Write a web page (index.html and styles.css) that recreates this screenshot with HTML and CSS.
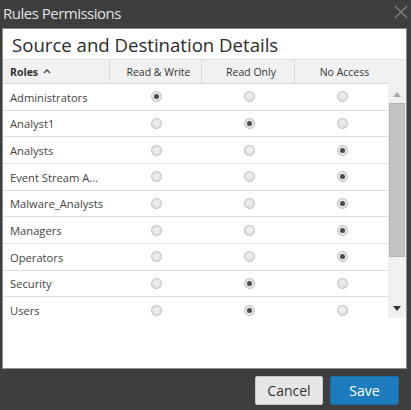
FILE: index.html
```html
<!DOCTYPE html>
<html>
<head>
<meta charset="utf-8">
<link rel="stylesheet" href="styles.css">
</head>
<body>
<div class="dialog">
  <div class="titlebar">
    <span class="title">Rules Permissions</span>
    <svg class="close" width="14" height="14" viewBox="0 0 14 14"><path d="M1 1L13 13M13 1L1 13" stroke="#7a7a7a" stroke-width="1.6" fill="none"/></svg>
  </div>
  <div class="panel">
    <div class="heading">Source and Destination Details</div>
    <div class="thead">
      <div class="th c-role">Roles <svg class="caret" width="8" height="6" viewBox="0 0 8 6"><path d="M1 5L4 2L7 5" stroke="#444" stroke-width="1.3" fill="none"/></svg></div>
      <div class="th c-rw">Read &amp; Write</div>
      <div class="th c-ro">Read Only</div>
      <div class="th c-na">No Access</div>
      <div class="th c-sb"></div>
    </div>
    <div class="tbody">
      <div class="rows">
        <div class="row"><div class="td c-role">Administrators</div><div class="td c-rw"><span class="radio on"></span></div><div class="td c-ro"><span class="radio"></span></div><div class="td c-na"><span class="radio"></span></div></div>
        <div class="row"><div class="td c-role">Analyst1</div><div class="td c-rw"><span class="radio"></span></div><div class="td c-ro"><span class="radio on"></span></div><div class="td c-na"><span class="radio"></span></div></div>
        <div class="row"><div class="td c-role">Analysts</div><div class="td c-rw"><span class="radio"></span></div><div class="td c-ro"><span class="radio"></span></div><div class="td c-na"><span class="radio on"></span></div></div>
        <div class="row"><div class="td c-role">Event Stream A...</div><div class="td c-rw"><span class="radio"></span></div><div class="td c-ro"><span class="radio"></span></div><div class="td c-na"><span class="radio on"></span></div></div>
        <div class="row"><div class="td c-role">Malware_Analysts</div><div class="td c-rw"><span class="radio"></span></div><div class="td c-ro"><span class="radio"></span></div><div class="td c-na"><span class="radio on"></span></div></div>
        <div class="row"><div class="td c-role">Managers</div><div class="td c-rw"><span class="radio"></span></div><div class="td c-ro"><span class="radio"></span></div><div class="td c-na"><span class="radio on"></span></div></div>
        <div class="row"><div class="td c-role">Operators</div><div class="td c-rw"><span class="radio"></span></div><div class="td c-ro"><span class="radio"></span></div><div class="td c-na"><span class="radio on"></span></div></div>
        <div class="row"><div class="td c-role">Security</div><div class="td c-rw"><span class="radio"></span></div><div class="td c-ro"><span class="radio on"></span></div><div class="td c-na"><span class="radio"></span></div></div>
        <div class="row"><div class="td c-role">Users</div><div class="td c-rw"><span class="radio"></span></div><div class="td c-ro"><span class="radio on"></span></div><div class="td c-na"><span class="radio"></span></div></div>
      </div>
      <div class="scrollbar">
        <svg class="arrow" width="8" height="5" viewBox="0 0 8 5"><path d="M0 5L4 0L8 5Z" fill="#a8a8a8"/></svg>
        <div class="track"><div class="thumb"></div></div>
        <svg class="arrow" width="8" height="5" viewBox="0 0 8 5"><path d="M0 0L8 0L4 5Z" fill="#333"/></svg>
      </div>
    </div>
  </div>
  <div class="footer">
    <button class="btn cancel">Cancel</button>
    <button class="btn save">Save</button>
  </div>
</div>
</body>
</html>
```
FILE: styles.css
```css
* { box-sizing: border-box; }
html, body { margin: 0; padding: 0; }
body {
  background: #3e3e3e;
  font-family: "Open Sans", "Noto Sans", sans-serif;
  width: 411px;
  height: 410px;
  overflow: hidden;
}
.dialog { display: flex; flex-direction: column; height: 410px; }
.titlebar {
  height: 28px;
  display: flex;
  align-items: center;
  justify-content: space-between;
  padding: 0 3px 2px 3px;
}
.title { color: #e2e2e2; font-size: 15px; letter-spacing: -0.5px; }
.close { margin-right: 0; margin-top: -2px; }
.panel {
  margin-left: 2px;
  width: 405px;
  height: 341px;
  background: #fff;
  border: 1px solid #8c8c8c;
  display: flex;
  flex-direction: column;
}
.heading {
  height: 30px;
  padding-left: 9px;
  font-size: 18.6px;
  line-height: 31px;
  color: #2b2b2b;
}
.thead {
  display: flex;
  height: 25px;
  background: #f1f1f1;
  border-top: 1px solid #e2e2e2;
}
.th {
  display: flex;
  align-items: center;
  justify-content: center;
  padding-left: 6px;
  font-size: 10.5px;
  color: #333;
  border-bottom: 1px solid #d6d6d6;
  border-right: 1px solid #d9d9d9;
}
.th.c-role { justify-content: flex-start; padding-left: 7px; font-weight: 700; }
.th.c-na { border-right: none; }
.th.c-sb { border-bottom: none; border-right: none; padding: 0; }
.caret { margin-left: 5px; margin-top: -1px; }
.c-role { width: 107px; }
.c-rw { width: 92px; }
.c-ro { width: 93px; }
.c-na { width: 93px; }
.c-sb { width: 18px; }
.tbody { display: flex; height: 234px; overflow: hidden; }
.rows { width: 385px; height: 234px; overflow: hidden; }
.row {
  display: flex;
  height: 26.67px;
  border-bottom: 1px solid #e0e0e0;
}
.td {
  display: flex;
  align-items: center;
  justify-content: center;
  font-size: 11.2px;
  color: #444;
}
.td.c-role { justify-content: flex-start; padding-left: 7px; padding-top: 1px; }
.radio {
  width: 11px;
  height: 11px;
  border-radius: 50%;
  border: 1px solid #bdbdbd;
  background: radial-gradient(circle at 50% 40%, #f0f0f0 0%, #dcdcdc 100%);
  display: flex;
  align-items: center;
  justify-content: center;
  margin-left: 1px;
}
.radio.on::after {
  content: "";
  width: 5px;
  height: 5px;
  border-radius: 50%;
  background: #4a4a4a;
}
.scrollbar {
  width: 18px;
  background: #f0f0f0;
  display: flex;
  flex-direction: column;
  align-items: center;
  padding: 8px 0 7px;
}
.arrow { flex: none; }
.track { flex: 1; width: 100%; padding: 6px 1px 0 1px; }
.thumb { height: 154px; background: #c2c2c2; border: 1px solid #b5b5b5; }
.footer {
  display: flex;
  justify-content: flex-end;
  gap: 7px;
  padding: 7px 12px 0 0;
}
.btn {
  height: 29px;
  font-family: "Open Sans", "Noto Sans", sans-serif;
  font-size: 14px;
  border-radius: 2px;
  padding: 0;
}
.cancel { width: 68px; background: #e6e6e6; border: 1px solid #c9c9c9; color: #333; }
.save { width: 69px; background: #1d7cbd; border: 1px solid #176aa3; color: #fff; }
```
